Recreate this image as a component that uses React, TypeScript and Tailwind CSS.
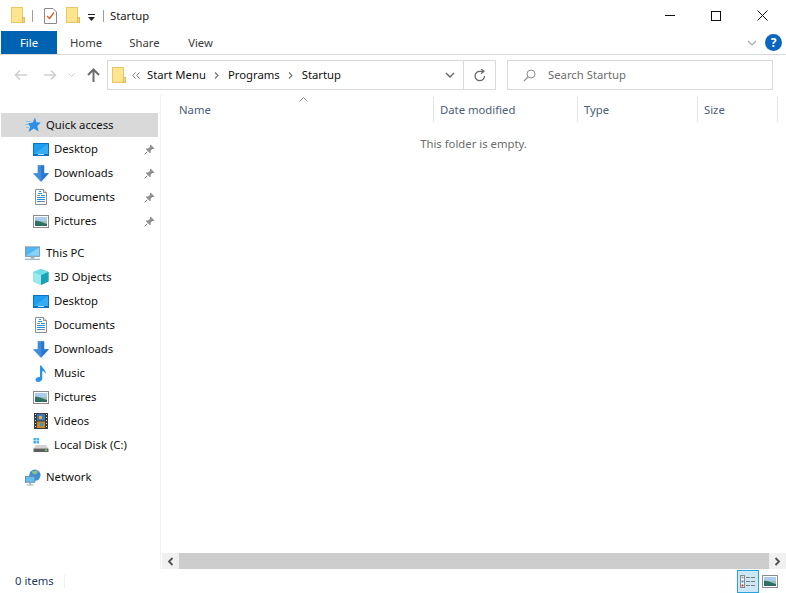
import React from "react";

const Folder = ({ className = "" }: { className?: string }) => (
  <svg width="14" height="17" viewBox="0 0 14 17" className={className}>
    <rect x="0.5" y="0.5" width="11" height="15" fill="#fde48f" stroke="#e9c767" />
    <rect x="11.5" y="10.5" width="2" height="5" fill="#f3d476" stroke="#e2bd5b" />
  </svg>
);

const Desktop = () => (
  <svg width="16" height="13" viewBox="0 0 16 13">
    <rect x="0" y="0" width="16" height="13" rx="0.5" fill="#0a6fc6" />
    <rect x="1" y="1" width="14" height="10" fill="#1e9cf0" />
    <path d="M1 11L15 1V11Z" fill="#35aef5" />
    <rect x="5" y="11" width="6" height="1" fill="#bfe0f7" />
  </svg>
);

const DownArrow = () => (
  <svg width="16" height="17" viewBox="0 0 16 17">
    <path d="M5 0.5H11V8.5H15.5L8 16.5L0.5 8.5H5Z" fill="#3d8ee0" stroke="#2f7fd1" strokeWidth="0.6" />
    <path d="M8 0.5H11V8.5H15.5L8 16.5Z" fill="#2b79cf" />
  </svg>
);

const Documents = () => (
  <svg width="16" height="16" viewBox="0 0 16 16">
    <path d="M2.5 0.5H10.5L13.5 3.5V15.5H2.5Z" fill="#fff" stroke="#8f8f8f" />
    <path d="M10.5 0.5V3.5H13.5" fill="#e8e8e8" stroke="#8f8f8f" />
    <path d="M6 2.5H8M5 4.5H9M8 6.5H12M4 8.5H12M4 10.5H12M4 12.5H12" stroke="#1f8fe8" strokeWidth="1" />
    <path d="M4 6.5H7M8 12.5H12" stroke="#8a8a8a" strokeWidth="1" />
  </svg>
);

const Pictures = () => (
  <svg width="16" height="13" viewBox="0 0 16 13">
    <rect x="0.5" y="0.5" width="15" height="12" fill="#fff" stroke="#8c8c8c" />
    <rect x="2" y="2" width="12" height="4" fill="#a9cdea" />
    <path d="M2 6H14V11H2Z" fill="#9fc0b4" />
    <path d="M2 6C6 5 9 8 14 9V11H2Z" fill="#2f6f63" />
  </svg>
);

const Pin = () => (
  <svg width="11" height="11" viewBox="0 0 11 11">
    <path d="M6.5 0.5L10.5 4.5L9.3 5.2L8.3 4.9L6.6 6.8L6.7 8.6L6 9.3L1.7 5L2.4 4.3L4.3 4.4L6.1 2.7L5.8 1.7Z" fill="#8f8f8f" />
    <path d="M3.3 7.7L0.5 10.5" stroke="#8f8f8f" />
  </svg>
);

const Star = () => (
  <svg width="16" height="16" viewBox="0 0 16 16">
    <path d="M10 0.5L11.4 5.3L15.8 5.5L12.3 8.9L13.6 14.5L8.8 11.4L3.6 15L5.2 9.5L2.5 6.6L7.8 5.5Z" fill="#2a8fe6" />
    <path d="M1 4.5H6M0 7.5H4M1 10.5H4" stroke="#8cc5f2" />
  </svg>
);

const Monitor = () => (
  <svg width="17" height="15" viewBox="0 0 17 15">
    <rect x="0.5" y="0.5" width="15" height="10" fill="#4fb6f3" stroke="#7e96a8" />
    <path d="M1 10L15 1V10Z" fill="#86d2f9" />
    <rect x="6" y="11" width="4" height="2" fill="#9fb1bd" />
    <rect x="0" y="13" width="16" height="1.5" fill="#a9b8c2" />
  </svg>
);

const Cube = () => (
  <svg width="16" height="16" viewBox="0 0 16 16">
    <path d="M8 0L15.5 3V12.5L8 16L0.5 12.5V3Z" fill="#37c3cf" />
    <path d="M8 0L15.5 3L8 6.2L0.5 3Z" fill="#6fdde4" />
    <path d="M8 6.2V16L0.5 12.5V3Z" fill="#9de8ec" />
    <path d="M8 6.2L15.5 3V12.5L8 16Z" fill="#1ba3b5" />
  </svg>
);

const Music = () => (
  <svg width="12" height="17" viewBox="0 0 12 17">
    <path d="M5 0.5H6.5C6.8 3 11 4.5 11 9C10 7 8.5 6.3 7.3 6V13.5C7.3 15.5 5 17 3 17C1.3 17 0.5 16 0.5 14.8C0.5 13 2.5 11.7 5 12Z" fill="#2c93e8" />
  </svg>
);

const Film = () => (
  <svg width="14" height="16" viewBox="0 0 14 16">
    <rect x="0" y="0" width="14" height="16" fill="#3c3c3c" />
    <path d="M1 1.5H2M1 4.5H2M1 7.5H2M1 10.5H2M1 13.5H2M12 1.5H13M12 4.5H13M12 7.5H13M12 10.5H13M12 13.5H13" stroke="#d9d9d9" />
    <rect x="3" y="1" width="8" height="6.5" fill="#3f79b8" />
    <rect x="3" y="8.5" width="8" height="6.5" fill="#c7872e" />
    <rect x="5" y="3" width="3" height="3" fill="#d8b23c" />
    <rect x="6" y="10" width="3" height="3" fill="#3e8fc9" />
  </svg>
);

const Disk = () => (
  <svg width="16" height="14" viewBox="0 0 16 14">
    <rect x="0.5" y="0" width="2.5" height="2.5" fill="#3fb5f2" />
    <rect x="3.5" y="0" width="2.5" height="2.5" fill="#3fb5f2" />
    <rect x="0.5" y="3" width="2.5" height="2.5" fill="#3fb5f2" />
    <rect x="3.5" y="3" width="2.5" height="2.5" fill="#3fb5f2" />
    <path d="M3 7H13L15.5 10.5H0.5Z" fill="#d2d2d2" />
    <rect x="0.5" y="10.5" width="15" height="3.5" fill="#5f5f5f" />
    <rect x="12" y="11.5" width="2" height="1.5" fill="#5fe05f" />
  </svg>
);

const Network = () => (
  <svg width="17" height="17" viewBox="0 0 17 17">
    <circle cx="10.5" cy="6" r="6" fill="#3f8fd6" />
    <path d="M7 1.5C9 3 11 0.5 13 1C14.5 3 12 5.5 10 5C8.5 5 7 3 7 1.5Z" fill="#8fbf80" />
    <rect x="0.5" y="7.5" width="10" height="6" fill="#63bff4" stroke="#6d8aa0" />
    <rect x="4.5" y="14" width="2" height="2" fill="#8ea3b1" />
    <rect x="2" y="16" width="7" height="1" fill="#9cacb7" />
  </svg>
);

type Item = { label: string; icon: React.ReactNode; pin?: boolean };

const Row = ({ item, level, active }: { item: Item; level: 0 | 1; active?: boolean }) => (
  <div className={`flex h-6 w-[157px] ml-px items-center ${active ? "bg-[#d9d9d9]" : ""} ${level === 0 ? "pl-[24px]" : "pl-[32px]"}`}>
    <span className="flex w-4 h-4 items-center justify-center shrink-0">{item.icon}</span>
    <span className="ml-[5px] flex-1 whitespace-nowrap">{item.label}</span>
    {item.pin && (
      <span className="mr-[3px] flex">
        <Pin />
      </span>
    )}
  </div>
);

const quick: Item[] = [
  { label: "Desktop", icon: <Desktop />, pin: true },
  { label: "Downloads", icon: <DownArrow />, pin: true },
  { label: "Documents", icon: <Documents />, pin: true },
  { label: "Pictures", icon: <Pictures />, pin: true },
];

const pc: Item[] = [
  { label: "3D Objects", icon: <Cube /> },
  { label: "Desktop", icon: <Desktop /> },
  { label: "Documents", icon: <Documents /> },
  { label: "Downloads", icon: <DownArrow /> },
  { label: "Music", icon: <Music /> },
  { label: "Pictures", icon: <Pictures /> },
  { label: "Videos", icon: <Film /> },
  { label: "Local Disk (C:)", icon: <Disk /> },
];

const Crumb = () => (
  <svg width="5" height="7" viewBox="0 0 5 7" className="ml-[8px] mr-[9px]">
    <path d="M1 0.5L4 3.5L1 6.5" fill="none" stroke="#6f6f6f" strokeWidth="1.1" />
  </svg>
);

const Column = ({ label, width }: { label: string; width: string }) => (
  <div className={`relative flex h-[25px] items-center pl-[6px] pt-px border-r border-[#e5e5e5] text-[#4c607a] ${width}`}>{label}</div>
);

export default function App() {
  return (
    <div
      className="flex h-[593px] w-[786px] flex-col overflow-hidden bg-white text-[11.3px] text-[#111111]"
      style={{ fontFamily: '"Noto Sans", "Open Sans", sans-serif' }}
    >
      {/* Title bar */}
      <div className="flex h-[31px] items-center">
        <Folder className="ml-[11px]" />
        <div className="ml-[7px] h-[12px] w-px bg-[#a0a0a0]" />
        <svg width="13" height="16" viewBox="0 0 13 16" className="ml-[11px]">
          <path d="M0.5 0.5H9L12.5 4V15.5H0.5Z" fill="#fff" stroke="#8a8a8a" />
          <path d="M3 8L5.5 10.5L10 4.5" fill="none" stroke="#e2572b" strokeWidth="1.3" />
        </svg>
        <Folder className="ml-[9px]" />
        <svg width="9" height="8" viewBox="0 0 9 8" className="ml-[7px] mt-[4px]">
          <path d="M1 0.5H8" stroke="#222" />
          <path d="M1 3H8L4.5 7Z" fill="#222" />
        </svg>
        <div className="ml-[7px] h-[12px] w-px bg-[#a0a0a0]" />
        <span className="ml-[6px] pt-px text-[#1a1a1a]">Startup</span>
        <div className="ml-auto flex items-center">
          <div className="flex w-[46px] justify-center">
            <div className="h-px w-[10px] bg-[#111]" />
          </div>
          <div className="flex w-[46px] justify-center">
            <div className="h-[10px] w-[10px] border border-[#111]" />
          </div>
          <div className="flex w-[46px] justify-center mr-[1px]">
            <svg width="11" height="11" viewBox="0 0 11 11">
              <path d="M0.5 0.5L10.5 10.5M10.5 0.5L0.5 10.5" stroke="#111" />
            </svg>
          </div>
        </div>
      </div>

      {/* Ribbon tabs */}
      <div className="flex h-[24px] items-stretch border-b border-[#dadada] pl-px">
        <div className="flex h-[23px] w-[56px] items-center justify-center pt-px bg-[#0063b1] text-white">File</div>
        <div className="flex h-[23px] w-[58px] items-center justify-center pt-px text-[#3b3b3b]">Home</div>
        <div className="flex h-[23px] w-[59px] items-center justify-center pt-px text-[#3b3b3b]">Share</div>
        <div className="flex h-[23px] w-[53px] items-center justify-center pt-px text-[#3b3b3b]">View</div>
        <div className="ml-auto flex h-[23px] items-center">
          <svg width="10" height="6" viewBox="0 0 10 6">
            <path d="M1 1L5 5L9 1" fill="none" stroke="#a8a8a8" strokeWidth="1.2" />
          </svg>
          <div className="ml-[8px] mr-[4px] flex h-[17px] w-[17px] items-center justify-center rounded-full bg-[#0b66c0] text-[12px] font-bold text-white">?</div>
        </div>
      </div>

      {/* Address row */}
      <div className="flex h-[40px] items-start pt-[5px]">
        <div className="flex h-[30px] w-[107px] items-center pl-[14px]">
          <svg width="14" height="12" viewBox="0 0 14 12">
            <path d="M13 6H2M6 1.5L1.5 6L6 10.5" fill="none" stroke="#cfcfcf" strokeWidth="1.6" />
          </svg>
          <svg width="14" height="12" viewBox="0 0 14 12" className="ml-[15px]">
            <path d="M1 6H12M8 1.5L12.5 6L8 10.5" fill="none" stroke="#cfcfcf" strokeWidth="1.6" />
          </svg>
          <svg width="7" height="5" viewBox="0 0 7 5" className="ml-[11px]">
            <path d="M0.5 0.5L3.5 3.5L6.5 0.5" fill="none" stroke="#cfcfcf" />
          </svg>
          <svg width="13" height="14" viewBox="0 0 13 14" className="ml-[12px]">
            <path d="M6.5 14V2M1 7L6.5 1.5L12 7" fill="none" stroke="#6e6e6e" strokeWidth="2" />
          </svg>
        </div>
        <div className="flex h-[30px] w-[389px] items-center border border-[#d9d9d9]">
          <Folder className="ml-[4px]" />
          <svg width="8" height="7" viewBox="0 0 8 7" className="ml-[6px]">
            <path d="M3.5 0.5L0.7 3.5L3.5 6.5M7.5 0.5L4.7 3.5L7.5 6.5" fill="none" stroke="#777" />
          </svg>
          <span className="ml-[7px]">Start Menu</span>
          <Crumb />
          <span>Programs</span>
          <Crumb />
          <span>Startup</span>
          <svg width="10" height="6" viewBox="0 0 10 6" className="ml-auto mr-[8px]">
            <path d="M1 1L5 5L9 1" fill="none" stroke="#666" strokeWidth="1.4" />
          </svg>
          <div className="flex h-full w-[32px] items-center justify-center border-l border-[#d9d9d9]">
            <svg width="12" height="13" viewBox="0 0 12 13">
              <path d="M10.5 7A4.7 4.7 0 1 1 6 2.3H9" fill="none" stroke="#6a6a6a" strokeWidth="1.3" />
              <path d="M7 0L10 2.3L7 4.8" fill="none" stroke="#6a6a6a" strokeWidth="1.2" />
            </svg>
          </div>
        </div>
        <div className="ml-[11px] flex h-[30px] w-[266px] items-center border border-[#d9d9d9]">
          <svg width="13" height="13" viewBox="0 0 13 13" className="ml-[15px]">
            <circle cx="8" cy="5" r="4" fill="none" stroke="#8e8e8e" />
            <path d="M5 8L1 12" stroke="#8e8e8e" strokeWidth="1.1" />
          </svg>
          <span className="ml-[12px] text-[#6d6d6d]">Search Startup</span>
        </div>
      </div>

      {/* Body */}
      <div className="flex min-h-0 flex-1">
        <nav className="w-[161px] shrink-0 border-r border-[#f0f0f0] pt-[18px]">
          <Row item={{ label: "Quick access", icon: <Star /> }} level={0} active />
          {quick.map((i) => (
            <Row key={i.label} item={i} level={1} />
          ))}
          <div className="mt-2">
            <Row item={{ label: "This PC", icon: <Monitor /> }} level={0} />
            {pc.map((i) => (
              <Row key={i.label} item={i} level={1} />
            ))}
          </div>
          <div className="mt-2">
            <Row item={{ label: "Network", icon: <Network /> }} level={0} />
          </div>
        </nav>
        <main className="flex min-w-0 flex-1 flex-col">
          <div className="relative flex pt-[2px]">
            <div className="flex h-[25px] w-[273px] items-center border-r border-[#e5e5e5] pl-[18px] pt-px text-[#4c607a]">Name</div>
            <svg width="9" height="5" viewBox="0 0 9 5" className="absolute left-[138px] top-[2px]">
              <path d="M0.5 4.5L4.5 0.5L8.5 4.5" fill="none" stroke="#8a8a8a" />
            </svg>
            <Column label="Date modified" width="w-[144px]" />
            <Column label="Type" width="w-[120px]" />
            <Column label="Size" width="w-[80px]" />
          </div>
          <div className="flex flex-1 justify-center pt-[14px] text-[#6d6d6d]">
            <span className="h-fit">This folder is empty.</span>
          </div>
          <div className="flex h-[16px] items-center bg-[#f0f0f0] ml-px">
            <div className="flex h-4 w-[17px] items-center justify-center">
              <svg width="7" height="9" viewBox="0 0 7 9">
                <path d="M5.5 1L2 4.5L5.5 8" fill="none" stroke="#505050" strokeWidth="1.8" />
              </svg>
            </div>
            <div className="h-4 flex-1 bg-[#cdcdcd]" />
            <div className="flex h-4 w-[17px] items-center justify-center">
              <svg width="7" height="9" viewBox="0 0 7 9">
                <path d="M1.5 1L5 4.5L1.5 8" fill="none" stroke="#505050" strokeWidth="1.8" />
              </svg>
            </div>
          </div>
        </main>
      </div>

      {/* Status bar */}
      <div className="flex h-[24px] items-center">
        <span className="ml-[15px] text-[#1f3a5f]">0 items</span>
        <div className="ml-[10px] h-[13px] w-px bg-[#efefef]" />
        <div className="ml-auto flex items-center pr-[8px]">
          <div className="flex h-[23px] w-[22px] items-center justify-center border border-[#29a3dd] bg-[#cce8f7]">
            <svg width="16" height="13" viewBox="0 0 16 13">
              <rect x="0.5" y="0.5" width="4" height="12" fill="#fff" stroke="#8a8a8a" />
              <rect x="1.5" y="1.5" width="2" height="2" fill="#9a9a9a" />
              <rect x="1.5" y="5.5" width="2" height="2" fill="#3f7fd0" />
              <rect x="1.5" y="9.5" width="2" height="2" fill="#c0392b" />
              <path d="M6 2.5H10M11 2.5H15M6 6.5H10M11 6.5H15M6 10.5H10M11 10.5H15" stroke="#7a7a7a" />
            </svg>
          </div>
          <span className="ml-[3px] flex">
            <Pictures />
          </span>
        </div>
      </div>
    </div>
  );
}
